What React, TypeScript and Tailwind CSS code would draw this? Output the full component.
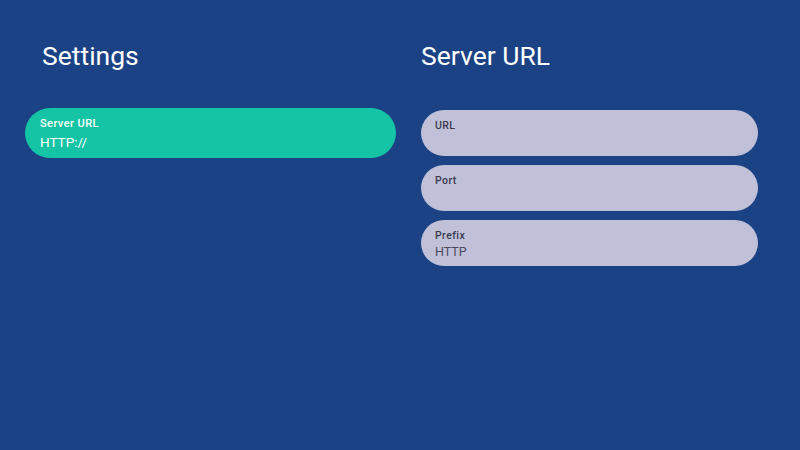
import React from 'react'

const Field = ({ label, value }: { label: string; value?: string }) => {
  return (
    <div className="h-[46px] w-[337px] rounded-full bg-[#c0c0d9] px-[14px] pt-[8px]">
      <p className="text-[10.5px] leading-4 font-medium tracking-[0.04em] text-[#3a3a4c]">{label}</p>
      {value && <p className="text-[12.5px] leading-4 text-[#4a4a5e]">{value}</p>}
    </div>
  )
}

const App = () => {
  return (
    <div
      className="flex h-[450px] w-[800px] bg-[#1b4285]"
      style={{ fontFamily: 'Roboto, "Noto Sans", sans-serif' }}
    >
      <div className="w-[396px] pl-[25px] pt-[40px]">
        <h1 className="ml-[17px] text-[26.5px] leading-8 text-white">Settings</h1>
        <div className="mt-[36px] h-[50px] w-[371px] rounded-full bg-[#15c4a5] px-[15px] pt-[8px]">
          <p className="text-[11px] leading-4 font-medium tracking-[0.04em] text-white">Server URL</p>
          <p className="text-[13.5px] leading-5 text-white">HTTP://</p>
        </div>
      </div>
      <div className="ml-[25px] pt-[40px]">
        <h1 className="text-[26.5px] leading-8 text-white">Server URL</h1>
        <div className="mt-[38px] flex flex-col gap-[9px]">
          <Field label="URL" />
          <Field label="Port" />
          <Field label="Prefix" value="HTTP" />
        </div>
      </div>
    </div>
  )
}

export default App
